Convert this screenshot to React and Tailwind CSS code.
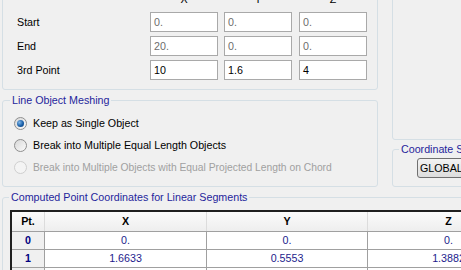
const F = "font-['Liberation_Sans',Arial,sans-serif]";

function Field({ value, dim, className = "" }) {
  return (
    <div
      className={`h-[20px] w-[68px] border border-[#a9a9a9] bg-white pl-[3px] flex items-center ${
        dim ? "text-[#6d6d6d]" : "text-black"
      } ${className}`}
    >
      {value}
    </div>
  );
}

function Radio({ checked, disabled, label }) {
  return (
    <div className="h-[22px] flex items-center">
      <div
        className={`w-[13px] h-[13px] rounded-full border flex items-center justify-center ${
          disabled
            ? "border-[#cfcfcf] bg-[#f4f4f4]"
            : "border-[#8f8f8f] bg-gradient-to-br from-[#d8d8d8] to-[#fbfbfb]"
        }`}
      >
        {checked && (
          <div className="w-[7px] h-[7px] rounded-full bg-[radial-gradient(circle_at_35%_35%,#7fb6e8,#1a5fa8_55%,#0a3a70)]" />
        )}
      </div>
      <span className={`ml-[6px] ${disabled ? "text-[#a0a0a0] text-[10.3px]" : "text-black"}`}>{label}</span>
    </div>
  );
}

function Legend({ children, className = "" }) {
  return (
    <legend className={`px-[2px] text-[#1f1f9c] leading-[13px] whitespace-nowrap ${className}`}>{children}</legend>
  );
}

export default function App() {
  const cols = "grid grid-cols-[33px_162px_161px_161px]";
  return (
    <div
      className={`w-[461px] h-[270px] overflow-hidden bg-[#f0f0f0] text-[10.7px] leading-[13px] text-black ${F}`}
    >
      <div className="w-[600px]">
        {/* top row */}
        <div className="flex pl-[2px]">
          <div className="w-[376px] flex flex-col">
            {/* coordinates panel */}
            <div className="mt-[-12px] border border-[#d5dfe5] rounded-[3px] pt-[4px] pb-[9px] pl-[14px]">
              <div className="flex h-[13px]">
                <div className="w-[133px]" />
                <div className="w-[68px] text-center">X</div>
                <div className="w-[68px] ml-[6px] text-center">Y</div>
                <div className="w-[68px] ml-[7px] text-center">Z</div>
              </div>
              <div className="mt-[6px] flex flex-col gap-[4px]">
                {[
                  ["Start", "0.", "0.", "0.", true],
                  ["End", "20.", "0.", "0.", true],
                  ["3rd Point", "10", "1.6", "4", false],
                ].map(([l, x, y, z, dim]) => (
                  <div key={l} className="flex items-center h-[20px]">
                    <div className="w-[133px]">{l}</div>
                    <Field value={x} dim={dim} />
                    <Field value={y} dim={dim} className="ml-[6px]" />
                    <Field value={z} dim={dim} className="ml-[7px]" />
                  </div>
                ))}
              </div>
            </div>

            {/* Line Object Meshing */}
            <fieldset className="mt-[4px] border border-[#d5dfe5] rounded-[3px]">
              <Legend className="ml-[7px]">Line Object Meshing</Legend>
              <div className="pt-[5px] pb-[8px] pl-[11px]">
                <Radio checked label="Keep as Single Object" />
                <Radio label="Break into Multiple Equal Length Objects" />
                <Radio disabled label="Break into Multiple Objects with Equal Projected Length on Chord" />
              </div>
            </fieldset>
          </div>

          <div className="ml-[14px] w-[120px] flex flex-col">
            <div className="mt-[-12px] h-[152px] border border-[#d5dfe5] rounded-[3px]" />
            <fieldset className="mt-[3px] border border-[#d5dfe5] rounded-[3px]">
              <Legend className="ml-[6px]">Coordinate System</Legend>
              <div className="pt-[2px] pb-[8px] pl-[24px]">
                <div className="h-[20px] w-[70px] border border-[#707070] rounded-[3px] bg-gradient-to-b from-[#f3f3f3] to-[#dddddd] pl-[2px] flex items-center">
                  GLOBAL
                </div>
              </div>
            </fieldset>
          </div>
        </div>

        {/* Computed points */}
        <fieldset className="mt-[4px] ml-[2px] border border-[#d5dfe5] rounded-[3px] h-[100px]">
          <Legend className="ml-[6px]">Computed Point Coordinates for Linear Segments</Legend>
          <div className="pt-[6px] pl-[7px]">
            <div className="border-t-2 border-l-2 border-[#202020] w-[520px] bg-white">
              <div className={`${cols} h-[20px] font-bold bg-gradient-to-b from-[#fbfbfb] to-[#eeeeee] border-b border-[#a0a0a0]`}>
                <div className="flex items-center justify-center border-r border-[#dcdcdc]">Pt.</div>
                <div className="flex items-center justify-center border-r border-[#dcdcdc]">X</div>
                <div className="flex items-center justify-center border-r border-[#dcdcdc]">Y</div>
                <div className="flex items-center justify-center">Z</div>
              </div>
              {[
                ["0", "0.", "0.", "0."],
                ["1", "1.6633", "0.5553", "1.3882"],
                ["2", "3.3266", "1.1106", "2.7765"],
              ].map((r) => (
                <div key={r[0]} className={`${cols} h-[18px] border-b border-[#a0a0a0] text-[#1c1c8c]`}>
                  <div className="flex items-center justify-center bg-[#f0f0f0] border-r border-[#a0a0a0] font-bold text-[#000080]">
                    {r[0]}
                  </div>
                  <div className="flex items-center justify-center border-r border-[#a0a0a0]">{r[1]}</div>
                  <div className="flex items-center justify-center border-r border-[#a0a0a0]">{r[2]}</div>
                  <div className="flex items-center justify-center">{r[3]}</div>
                </div>
              ))}
            </div>
          </div>
        </fieldset>
      </div>
    </div>
  );
}
